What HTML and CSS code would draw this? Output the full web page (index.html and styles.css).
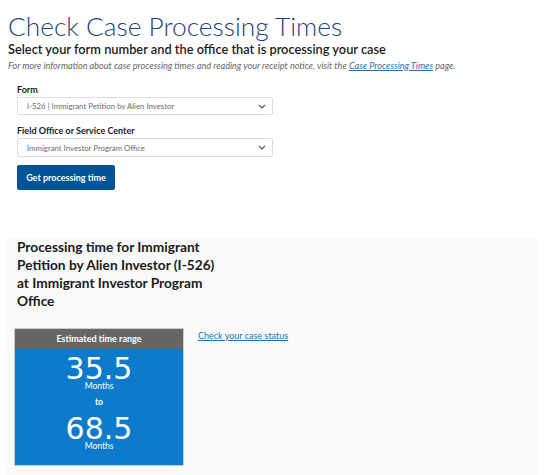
FILE: index.html
```html
<!DOCTYPE html>
<html>
<head>
<meta charset="utf-8">
<link rel="stylesheet" href="styles.css">
</head>
<body>
<main class="page">
  <h1 class="title">Check Case Processing Times</h1>
  <h2 class="subtitle">Select your form number and the office that is processing your case</h2>
  <p class="info">For more information about case processing times and reading your receipt notice, visit the <a href="#">Case Processing Times</a> page.</p>
  <form class="form">
    <label class="label">Form</label>
    <div class="select select-form"><span>I-526 | Immigrant Petition by Alien Investor</span><svg width="8" height="5" viewBox="0 0 8 5"><path d="M1 1l3 3 3-3" fill="none" stroke="#555" stroke-width="1.2"/></svg></div>
    <label class="label">Field Office or Service Center</label>
    <div class="select select-office"><span>Immigrant Investor Program Office</span><svg width="8" height="5" viewBox="0 0 8 5"><path d="M1 1l3 3 3-3" fill="none" stroke="#555" stroke-width="1.2"/></svg></div>
    <button type="button" class="btn">Get processing time</button>
  </form>
  <section class="result">
    <h3 class="result-title">Processing time for Immigrant Petition by Alien Investor (I-526) at Immigrant Investor Program Office</h3>
    <div class="result-row">
      <div class="range">
        <div class="range-head">Estimated time range</div>
        <div class="range-body">
          <div class="num num-first">35.5</div>
          <div class="unit">Months</div>
          <div class="to">to</div>
          <div class="num num-second">68.5</div>
          <div class="unit">Months</div>
        </div>
      </div>
      <a href="#" class="status">Check your case status</a>
    </div>
  </section>
</main>
</body>
</html>
```
FILE: styles.css
```css
* { box-sizing: border-box; }
html, body { margin: 0; padding: 0; background: #fff; }
body { font-family: "Lato", "Open Sans", sans-serif; color: #1b1b1b; }
.page { padding: 12px 0 0 8px; width: 554px; }
.title { margin: 0; font-weight: 300; font-size: 26.3px; line-height: 29px; color: #1a4480; }
.subtitle { margin: 0; font-weight: 600; font-size: 12.8px; line-height: 16px; color: #1b1b1b; }
.info { margin: 2.5px 0 0; font-style: italic; font-size: 9.1px; line-height: 11px; color: #666; }
.info a { color: #2a6fa8; text-decoration: underline; }
.form { padding: 13.5px 0 0 9px; display: flex; flex-direction: column; align-items: flex-start; }
.label { font-weight: 700; font-size: 9px; line-height: 11px; color: #1b1b1b; margin-bottom: 2px; }
.select { width: 256px; height: 18px; border: 1px solid #dcdcdc; border-radius: 2px; display: flex; align-items: center; justify-content: space-between; padding: 0 6px 0 9px; font-size: 7.8px; color: #6b6b6b; }
.select-form { margin-bottom: 10px; }
.select-office { height: 19px; margin-bottom: 8px; }
.btn { width: 98px; height: 25px; background: #005396; color: #fff; border: 0; border-radius: 2px; font-family: inherit; font-weight: 700; font-size: 9px; padding: 0; }
.result { margin: 48px 0 0 -2px; width: 531px; background: #f9f9f9; padding: 0 0 10px 11px; min-height: 237px; }
.result-title { margin: 0; width: 200px; font-weight: 700; font-size: 13.7px; line-height: 18px; color: #1b1b1b; }
.result-row { display: flex; align-items: flex-start; margin-top: 19px; gap: 15px; }
.range { width: 168px; margin-left: -2px; box-shadow: 0 0 0 0.6px #aaa; }
.range-head { background: #666; color: #fff; font-weight: 700; font-size: 9px; height: 20px; line-height: 20px; text-align: center; }
.range-body { background: #0e7acc; color: #fff; text-align: center; height: 116px; padding-top: 6.3px; }
.num { font-family: "DejaVu Sans", "Lato", sans-serif; font-size: 30px; line-height: 27px; font-weight: 400; }
.num-second { margin-top: 7.9px; }
.unit { font-size: 8.5px; line-height: 9px; }
.to { font-size: 8.5px; font-weight: 700; line-height: 9px; margin-top: 6.5px; }
.status { font-size: 9px; line-height: 11px; color: #2a6fa8; text-decoration: underline; margin-top: 1px; }
```
